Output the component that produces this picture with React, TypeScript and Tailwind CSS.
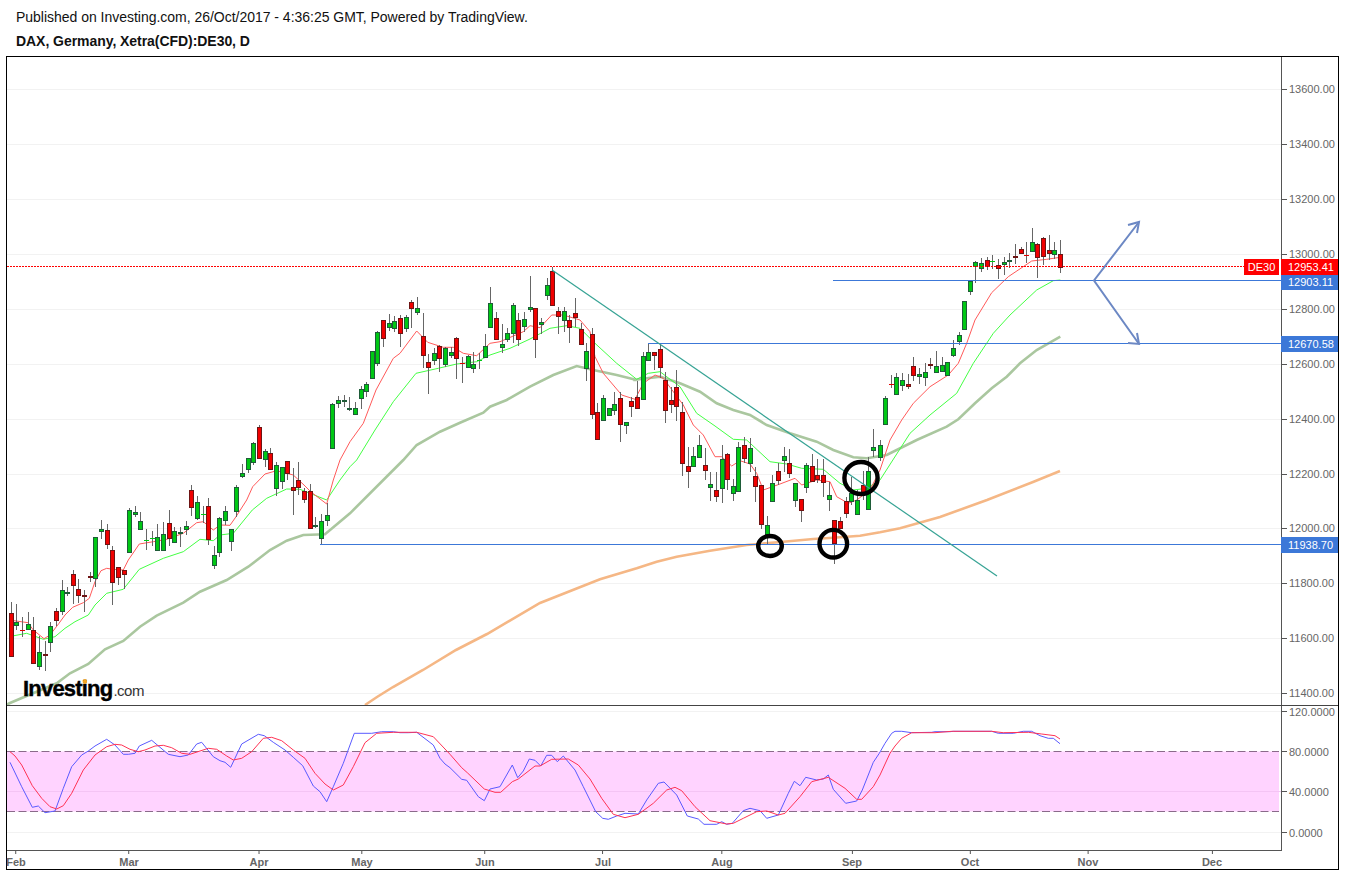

// DAX daily chart snapshot, values read off the reference at 3x zoom
type Candle = [number, number, number, number, number, string];
type Pt = [number, number];

const fromZoom = (ox: number, oy: number, pts: number[][]): Pt[] =>
  pts.map(p => [ox + p[0] / 3, oy + p[1] / 3] as Pt);

const toPoints = (pts: Pt[]) => pts.map(p => `${p[0].toFixed(1)},${p[1].toFixed(1)}`).join(' ');

const candleSets: { ox: number; oy: number; rows: Candle[] }[] = [
  {
    ox: 0, oy: 500, rows: [
      [34, 307, 469, 340, 469, 'r'], [49, 313, 390, 367, 376, 'g'], [67, 352, 410, 391, 391, 'r'], [85, 337, 390, 373, 386, 'g'],
      [100, 350, 490, 391, 490, 'r'], [118, 408, 510, 457, 499, 'g'], [136, 422, 512, 461, 461, 'm'], [151, 367, 455, 379, 427, 'g'],
      [169, 325, 378, 334, 361, 'r'], [187, 240, 345, 271, 334, 'g'], [202, 260, 288, 275, 275, 'd'], [220, 210, 312, 223, 256, 'r'],
      [235, 237, 308, 268, 286, 'r'], [253, 270, 335, 284, 284, 'm'], [271, 215, 245, 227, 227, 'm'], [287, 112, 262, 112, 235, 'g'],
      [304, 60, 118, 88, 94, 'g'], [322, 72, 146, 91, 131, 'r'], [338, 139, 315, 151, 247, 'r'], [355, 200, 255, 202, 232, 'r'],
      [373, 211, 268, 211, 223, 'r'], [388, 25, 158, 31, 157, 'g'], [406, 18, 50, 37, 43, 'g'], [421, 37, 90, 64, 88, 'g'],
    ],
  },
  {
    ox: 0, oy: 290, rows: [
      [439, 717, 780, 751, 751, 'g'], [457, 723, 768, 745, 745, 'g'], [472, 702, 782, 742, 781, 'g'], [490, 696, 782, 733, 779, 'g'],
      [508, 660, 768, 700, 745, 'r'], [523, 712, 757, 724, 755, 'g'], [541, 712, 771, 725, 725, 'd'], [559, 693, 735, 709, 716, 'g'],
      [574, 585, 678, 601, 650, 'r'], [592, 618, 690, 637, 685, 'g'], [610, 648, 700, 673, 673, 'g'], [625, 625, 765, 649, 748, 'r'],
      [643, 768, 836, 796, 824, 'g'], [658, 680, 800, 685, 787, 'g'], [676, 648, 705, 664, 689, 'g'], [694, 718, 782, 718, 752, 'g'],
      [709, 586, 680, 592, 664, 'g'], [727, 522, 565, 550, 557, 'g'], [745, 505, 548, 505, 536, 'g'], [760, 457, 525, 460, 517, 'g'],
      [778, 405, 505, 412, 505, 'r'], [796, 477, 530, 484, 506, 'g'], [811, 475, 540, 488, 538, 'r'], [829, 517, 617, 526, 595, 'g'],
      [847, 532, 598, 532, 574, 'g'], [862, 514, 570, 514, 550, 'r'], [880, 534, 674, 592, 601, 'r'], [895, 517, 614, 571, 590, 'r'],
      [913, 595, 640, 604, 626, 'r'], [931, 583, 717, 604, 715, 'r'], [946, 682, 715, 705, 705, 'd'], [964, 672, 762, 694, 743, 'g'],
      [982, 640, 708, 676, 689, 'g'],
    ],
  },
  {
    ox: 300, oy: 260, rows: [
      [97, 430, 565, 433, 563, 'g'], [115, 408, 443, 421, 430, 'g'], [133, 405, 440, 419, 419, 'd'], [148, 410, 452, 443, 443, 'd'],
      [166, 426, 465, 445, 463, 'g'], [184, 378, 446, 388, 413, 'g'], [199, 365, 410, 373, 394, 'g'], [217, 274, 358, 274, 353, 'g'],
      [232, 214, 317, 217, 310, 'g'], [250, 180, 260, 181, 235, 'r'], [268, 163, 214, 190, 202, 'g'], [283, 167, 216, 184, 205, 'g'],
      [301, 165, 260, 175, 220, 'r'], [319, 165, 215, 172, 205, 'g'], [334, 120, 205, 127, 143, 'r'], [352, 110, 165, 145, 157, 'g'],
      [370, 160, 325, 229, 286, 'r'], [385, 282, 402, 307, 322, 'r'], [403, 265, 315, 280, 301, 'g'], [418, 256, 335, 259, 295, 'r'],
      [436, 262, 320, 265, 313, 'g'], [454, 262, 295, 277, 286, 'g'], [469, 232, 357, 235, 295, 'r'], [487, 292, 368, 310, 310, 'r'],
      [505, 285, 325, 289, 322, 'g'], [520, 275, 340, 313, 325, 'g'], [538, 280, 327, 301, 301, 'g'], [556, 222, 295, 259, 292, 'g'],
      [571, 82, 205, 130, 202, 'g'], [589, 155, 240, 175, 238, 'r'], [607, 192, 278, 253, 262, 'g'], [622, 205, 245, 220, 238, 'g'],
      [640, 130, 250, 136, 220, 'g'], [655, 160, 258, 181, 238, 'r'], [673, 155, 215, 178, 199, 'g'], [691, 48, 155, 142, 148, 'g'],
      [706, 145, 293, 145, 238, 'r'], [724, 175, 222, 187, 193, 'g'], [742, 55, 120, 76, 106, 'g'], [757, 20, 136, 34, 136, 'r'],
      [775, 142, 222, 154, 169, 'r'], [793, 142, 216, 154, 181, 'g'], [808, 165, 248, 181, 202, 'r'], [826, 115, 200, 160, 172, 'r'],
      [844, 190, 255, 208, 253, 'r'], [859, 250, 363, 274, 325, 'g'], [877, 205, 478, 223, 463, 'r'], [892, 428, 540, 457, 538, 'r'],
    ],
  },
  {
    ox: 600, oy: 340, rows: [
      [10, 165, 242, 175, 241, 'g'], [28, 205, 226, 205, 226, 'g'], [43, 157, 225, 193, 211, 'g'], [61, 157, 305, 175, 253, 'r'],
      [79, 247, 283, 247, 256, 'g'], [94, 170, 230, 184, 199, 'r'], [112, 122, 207, 172, 205, 'r'], [130, 35, 180, 49, 178, 'g'],
      [145, 10, 62, 37, 61, 'g'], [163, 37, 90, 37, 46, 'r'], [181, 10, 115, 28, 82, 'r'], [196, 95, 248, 121, 211, 'r'],
      [214, 140, 220, 181, 193, 'r'], [229, 90, 242, 142, 199, 'r'], [247, 185, 407, 217, 370, 'r'], [265, 320, 445, 379, 394, 'r'],
      [280, 320, 382, 349, 379, 'g'], [298, 285, 355, 316, 352, 'g'], [316, 325, 420, 376, 391, 'r'], [331, 395, 482, 433, 442, 'g'],
      [349, 395, 485, 451, 469, 'r'], [367, 315, 488, 358, 445, 'g'], [382, 340, 450, 343, 418, 'r'], [400, 418, 482, 439, 460, 'g'],
      [415, 305, 455, 322, 454, 'g'], [433, 290, 370, 316, 355, 'r'], [451, 295, 395, 325, 370, 'g'], [466, 380, 485, 409, 439, 'r'],
      [484, 436, 568, 436, 553, 'r'], [502, 528, 615, 556, 583, 'g'], [517, 405, 485, 430, 484, 'g'], [535, 370, 435, 394, 421, 'r'],
      [553, 320, 395, 349, 361, 'g'], [568, 328, 415, 370, 400, 'r'], [586, 430, 500, 430, 481, 'g'], [604, 478, 545, 478, 511, 'r'],
      [619, 370, 460, 376, 442, 'g'], [637, 343, 425, 379, 424, 'r'], [652, 358, 430, 406, 418, 'r'], [670, 358, 470, 406, 427, 'r'],
      [688, 425, 512, 466, 478, 'g'], [703, 541, 672, 541, 610, 'r'], [721, 532, 565, 544, 565, 'r'], [739, 470, 535, 484, 520, 'r'],
      [754, 410, 495, 460, 484, 'g'], [772, 450, 525, 481, 523, 'g'], [790, 392, 480, 435, 455, 'r'], [805, 350, 508, 392, 508, 'g'],
      [821, 267, 350, 322, 331, 'g'], [841, 300, 362, 316, 352, 'g'],
    ],
  },
  {
    ox: 850, oy: 200, rows: [
      [106, 588, 674, 595, 673, 'g'], [124, 525, 563, 553, 553, 'r'], [139, 520, 585, 532, 583, 'g'], [157, 520, 572, 541, 556, 'g'],
      [175, 522, 566, 553, 559, 'r'], [190, 470, 543, 499, 526, 'r'], [208, 505, 552, 523, 529, 'g'], [226, 488, 558, 517, 532, 'g'],
      [241, 475, 506, 491, 491, 'm'], [259, 453, 518, 499, 517, 'g'], [277, 472, 516, 496, 514, 'g'], [292, 487, 527, 487, 526, 'g'],
      [310, 420, 470, 445, 466, 'g'], [328, 395, 436, 406, 424, 'g'], [343, 304, 390, 304, 388, 'g'], [361, 242, 284, 244, 274, 'g'],
      [376, 182, 248, 187, 199, 'g'], [394, 175, 215, 190, 205, 'g'], [412, 170, 210, 181, 199, 'r'], [427, 165, 208, 184, 184, 'g'],
      [445, 178, 236, 196, 205, 'r'], [463, 172, 225, 187, 193, 'g'], [478, 160, 205, 180, 180, 'd'], [496, 132, 192, 168, 168, 'm'],
      [514, 140, 162, 148, 160, 'r'], [529, 125, 188, 166, 166, 'r'], [547, 85, 157, 127, 154, 'g'], [562, 130, 234, 133, 172, 'r'],
      [580, 112, 196, 115, 169, 'r'], [598, 105, 180, 151, 160, 'r'], [613, 127, 178, 151, 163, 'g'], [631, 120, 218, 163, 202, 'r'],
    ],
  },
];

const candles = candleSets.flatMap(set =>
  set.rows.map(r => ({
    x: Math.floor(set.ox + r[0] / 3) + 0.5,
    wickTop: Math.round(set.oy + r[1] / 3),
    wickBottom: Math.round(set.oy + r[2] / 3),
    top: Math.round(set.oy + r[3] / 3) + 0.5,
    bottom: Math.round(set.oy + r[4] / 3) + 0.5,
    kind: r[5],
  })),
);

const redEma = toPoints([
  ...fromZoom(0, 500, [[42, 362], [84, 368], [100, 390], [132, 416], [150, 405], [177, 370], [195, 345], [218, 322], [250, 308], [268, 295], [285, 245], [303, 212], [320, 205], [338, 208], [370, 210], [385, 180], [418, 132], [460, 125], [500, 118], [550, 100], [590, 68]]),
  ...fromZoom(0, 290, [[610, 695], [640, 720], [660, 705], [690, 706], [708, 680], [740, 630], [758, 590], [795, 552], [830, 542], [880, 555], [912, 585], [932, 605], [980, 642], [1000, 570], [1020, 510]]),
  ...fromZoom(300, 260, [[150, 545], [190, 490], [228, 390], [280, 295], [300, 280], [350, 213], [383, 247], [430, 262], [460, 262], [490, 280], [530, 287], [570, 250], [600, 245], [670, 215], [690, 197], [720, 203], [755, 165], [790, 165], [840, 180], [870, 215], [885, 290]]),
  ...fromZoom(600, 340, [[10, 100], [65, 165], [105, 178], [130, 130], [165, 105], [190, 115], [250, 195], [280, 255], [310, 285], [345, 350], [365, 350], [395, 378], [420, 362], [450, 372], [470, 400], [490, 450], [540, 432], [585, 415], [605, 435], [650, 420], [690, 425], [710, 470], [745, 490], [770, 480], [810, 450]]),
  ...fromZoom(850, 200, [[90, 810], [120, 720], [155, 660], [190, 610], [240, 560], [295, 525], [325, 490], [350, 430], [375, 360], [425, 278], [475, 230], [545, 183], [590, 178], [631, 172]]),
]);

const greenEma = toPoints([
  ...fromZoom(0, 500, [[42, 407], [80, 400], [130, 418], [165, 410], [195, 385], [225, 365], [265, 345], [285, 315], [320, 280], [370, 268], [418, 208], [490, 175], [550, 155], [600, 118]]),
  ...fromZoom(0, 290, [[640, 752], [660, 735], [700, 730], [757, 660], [800, 625], [860, 597], [900, 598], [980, 630], [1020, 570], [1050, 530]]),
  ...fromZoom(300, 260, [[170, 600], [225, 510], [280, 425], [348, 340], [415, 325], [470, 312], [530, 305], [570, 285], [630, 265], [690, 237], [750, 205], [800, 197], [840, 205], [885, 250]]),
  ...fromZoom(600, 340, [[50, 70], [110, 118], [145, 100], [180, 95], [240, 140], [290, 220], [345, 258], [400, 298], [440, 300], [510, 365], [560, 372], [605, 385], [670, 388], [720, 430], [760, 450], [800, 445]]),
  ...fromZoom(850, 200, [[90, 840], [180, 700], [240, 645], [320, 580], [370, 490], [430, 400], [480, 345], [560, 270], [610, 242], [631, 240]]),
]);

const oliveEma = toPoints([
  [6, 705], [10, 703], ...fromZoom(0, 500, [[170, 550], [210, 520], [265, 492], [315, 448], [370, 423], [420, 380], [470, 347], [550, 308], [600, 275]]),
  ...fromZoom(0, 290, [[680, 870], [745, 830], [810, 780], [860, 752], [910, 735], [975, 733], [1050, 670]]),
  ...fromZoom(300, 260, [[310, 600], [350, 555], [420, 515], [480, 488], [550, 458], [570, 440], [620, 420], [690, 380], [760, 345], [830, 318], [880, 330], [950, 345], [1010, 360]]),
  ...fromZoom(600, 340, [[100, 120], [180, 110], [240, 130], [300, 155], [350, 190], [400, 210], [450, 225], [500, 255], [570, 280], [650, 305], [700, 330], [760, 352]]),
  ...fromZoom(850, 200, [[50, 775], [110, 765], [200, 720], [290, 680], [325, 658], [375, 610], [425, 565], [470, 530], [510, 490], [560, 450], [631, 410]]),
]);

const orangeEma = toPoints([
  [365, 705], [377, 697], [393, 687], [423, 670], [456, 650], [487, 634], [540, 603],
  ...fromZoom(600, 340, [[0, 718], [60, 700], [110, 685], [170, 665], [230, 650], [330, 632], [440, 615], [550, 605], [640, 597], [700, 593], [780, 587], [840, 577], [900, 565]]),
  [940, 517], [987, 500], [1033, 482], [1060, 471],
]);

const stochBlue = toPoints([
  ...fromZoom(0, 670, [[30, 277], [65, 350], [97, 412], [115, 408], [135, 428], [165, 423], [190, 355], [215, 290], [245, 255], [265, 243], [285, 228], [320, 208], [345, 225], [370, 253], [385, 253], [405, 250], [418, 228], [455, 211], [480, 232], [505, 253], [540, 260], [565, 255], [590, 222], [605, 217], [640, 260], [660, 272], [675, 277], [692, 292], [725, 222], [775, 193], [793, 197], [820, 217], [855, 240], [880, 262], [908, 287], [940, 348], [960, 365], [980, 395], [1000, 350], [1030, 280], [1063, 190], [1115, 190], [1145, 185], [1180, 185], [1200, 188], [1225, 188], [1250, 187], [1300, 225], [1320, 265], [1335, 282]]),
  ...fromZoom(450, 700, [[0, 203], [35, 238], [50, 241], [85, 290], [103, 302], [120, 267], [150, 260], [187, 195], [203, 233], [220, 213], [238, 177], [255, 181], [272, 198], [290, 166], [305, 166], [322, 185], [340, 168], [375, 210], [400, 260], [437, 335], [458, 355], [475, 358], [500, 348], [525, 340], [565, 342], [590, 300], [625, 250], [642, 246], [680, 285], [712, 348], [745, 357], [762, 373], [800, 373], [815, 365], [830, 373], [847, 370], [880, 332], [900, 325], [930, 332], [950, 355], [985, 345], [1015, 280], [1033, 244], [1050, 257], [1067, 232], [1100, 240], [1120, 237], [1135, 225], [1150, 268], [1187, 310], [1220, 303], [1237, 270], [1270, 187], [1288, 160], [1305, 130], [1325, 100]]),
  ...fromZoom(895, 700, [[0, 94], [20, 94], [50, 98], [110, 97], [120, 95], [165, 95], [175, 94], [290, 94], [310, 100], [355, 100], [385, 94], [410, 94], [435, 107], [460, 115], [475, 115], [495, 131]]),
]);

const stochRed = toPoints([
  ...fromZoom(0, 670, [[30, 245], [45, 258], [65, 285], [97, 347], [125, 385], [150, 410], [170, 417], [190, 407], [215, 370], [250, 300], [285, 255], [320, 230], [345, 223], [365, 225], [390, 238], [415, 245], [435, 240], [465, 228], [490, 226], [515, 233], [545, 250], [570, 253], [600, 243], [625, 235], [650, 238], [680, 258], [700, 270], [725, 265], [755, 245], [790, 205], [815, 202], [845, 212], [880, 240], [915, 265], [945, 310], [975, 342], [1000, 360], [1030, 345], [1060, 290], [1095, 218], [1130, 190], [1180, 187], [1250, 187], [1300, 200]]),
  ...fromZoom(450, 700, [[0, 163], [35, 203], [52, 218], [103, 267], [135, 277], [152, 277], [187, 245], [205, 237], [255, 198], [270, 198], [305, 178], [355, 177], [385, 195], [420, 237], [455, 295], [490, 343], [525, 353], [565, 343], [610, 310], [650, 270], [675, 262], [695, 272], [735, 320], [780, 362], [830, 372], [850, 370], [880, 355], [920, 335], [950, 333], [985, 345], [1005, 340], [1050, 290], [1085, 245], [1135, 232], [1185, 265], [1220, 298], [1235, 298], [1270, 260], [1290, 225], [1320, 160]]),
  ...fromZoom(895, 700, [[0, 138], [20, 115], [50, 98], [120, 98], [170, 94], [290, 94], [325, 98], [400, 97], [440, 102], [480, 107], [495, 117]]),
]);

const priceGrid = [89, 144, 199, 254, 309, 364, 419, 474, 528, 583, 638, 693];
const priceTicks = ['13600.00', '13400.00', '13200.00', '13000.00', '12800.00', '12600.00', '12400.00', '12200.00', '12000.00', '11800.00', '11600.00', '11400.00'];
const priceTags = [
  { label: '12953.41', top: 259, height: 16, color: 'bg-[#ff0000]' },
  { label: '12903.11', top: 275, height: 15, color: 'bg-[#3c78d8]' },
  { label: '12670.58', top: 336, height: 16, color: 'bg-[#3c78d8]' },
  { label: '11938.70', top: 537, height: 16, color: 'bg-[#3c78d8]' },
];
const stochTicks = [
  { label: '120.0000', y: 711.5 },
  { label: '80.0000', y: 751.5 },
  { label: '40.0000', y: 791.5 },
  { label: '0.0000', y: 832.5 },
];
const months = [
  { label: 'Feb', x: 16 }, { label: 'Mar', x: 129 }, { label: 'Apr', x: 259 }, { label: 'May', x: 362 },
  { label: 'Jun', x: 485 }, { label: 'Jul', x: 603 }, { label: 'Aug', x: 722 }, { label: 'Sep', x: 852 },
  { label: 'Oct', x: 970 }, { label: 'Nov', x: 1088 }, { label: 'Dec', x: 1212 },
];

const fills: Record<string, [string, string]> = {
  g: ['#00c814', '#1e5c38'],
  r: ['#f00000', '#6e1414'],
};
const flats: Record<string, string> = { g: '#00c814', r: '#e00000', d: '#1e5c38', m: '#6e1414' };

function PriceChart() {
  return (
    <svg className="block w-[1274px] h-[648px]" viewBox="7 57 1274 648">
      {priceGrid.map(y => (
        <line key={y} x1={7} x2={1281} y1={y + 0.5} y2={y + 0.5} stroke="#f2f2f2" />
      ))}
      <polyline points={oliveEma} fill="none" stroke="#aac79f" strokeWidth={2.6} />
      <polyline points={orangeEma} fill="none" stroke="#f5b785" strokeWidth={2.6} />
      <polyline points={greenEma} fill="none" stroke="#44ff44" strokeWidth={1} />
      <polyline points={redEma} fill="none" stroke="#ff5a5a" strokeWidth={1} />
      <g shapeRendering="crispEdges">
        {candles.map(c => (
          <g key={c.x}>
            <line x1={c.x} x2={c.x} y1={c.wickTop} y2={c.wickBottom} stroke="#666666" />
            {c.top === c.bottom ? (
              <line x1={c.x - 2.5} x2={c.x + 2.5} y1={c.top} y2={c.top} stroke={flats[c.kind]} strokeWidth={c.kind === 'd' || c.kind === 'm' ? 2 : 1} />
            ) : (
              <rect x={c.x - 2} y={c.top} width={4} height={c.bottom - c.top} fill={fills[c.kind][0]} stroke={fills[c.kind][1]} />
            )}
          </g>
        ))}
      </g>
      <line x1={7} x2={1244} y1={266.5} y2={266.5} stroke="#ff0000" strokeDasharray="2 1" shapeRendering="crispEdges" />
      <g stroke="#3c78d8" shapeRendering="crispEdges">
        <line x1={833} x2={1281} y1={280.5} y2={280.5} />
        <line x1={648} x2={1281} y1={343.5} y2={343.5} />
        <line x1={320} x2={1281} y1={544.5} y2={544.5} />
      </g>
      <line x1={552} y1={270} x2={997} y2={576} stroke="#36a394" strokeWidth={1.2} />
      <g fill="none" stroke="#6c88c4" strokeWidth={2}>
        <polyline points="1139,222 1094,280.5 1139,344" />
        <polyline points="1128,225 1139,222 1137,233" />
        <polyline points="1128,343 1139,344 1137,333" />
      </g>
      <g fill="none" stroke="#000000" strokeWidth={4.4}>
        <ellipse cx={770} cy={546} rx={11.8} ry={10} />
        <ellipse cx={833.3} cy={543.7} rx={13.8} ry={13.8} />
        <ellipse cx={861} cy={478} rx={16.6} ry={16} />
      </g>
    </svg>
  );
}

function StochChart() {
  return (
    <svg className="block w-[1274px] h-[144px]" viewBox="7 706 1274 144">
      <rect x={7} y={751.5} width={1272} height={60} fill="#ffd3ff" />
      {[711.5, 791.5, 832.5].map(y => (
        <line key={y} x1={7} x2={1281} y1={y} y2={y} stroke={y === 791.5 ? '#f4c4f4' : '#f2f2f2'} />
      ))}
      <g stroke="#8a6a8a" strokeDasharray="8 3.5">
        <line x1={7} x2={1279} y1={751.5} y2={751.5} />
        <line x1={7} x2={1279} y1={811.5} y2={811.5} />
      </g>
      <polyline points={stochBlue} fill="none" stroke="#5a5aff" strokeWidth={1} />
      <polyline points={stochRed} fill="none" stroke="#ff3355" strokeWidth={1} />
    </svg>
  );
}

function AxisLabel({ y, label }: { y: number; label: string }) {
  return (
    <div className="absolute left-0 flex items-center h-[14px] -translate-y-1/2" style={{ top: y }}>
      <span className="block w-[5px] h-px bg-[#555555]" />
      <span className="ml-[2px] text-[11px] leading-[14px] text-[#666666]">{label}</span>
    </div>
  );
}

export default function App() {
  return (
    <div className="w-[1345px] h-[874px] bg-white overflow-hidden font-['Liberation_Sans',Arial,sans-serif]">
      <div className="h-[56px] pl-[16px] pt-[10px]">
        <p className="text-[14px] leading-[15px] tracking-[-0.02px] text-[#111111]">
          Published on Investing.com, 26/Oct/2017 - 4:36:25 GMT, Powered by TradingView.
        </p>
        <p className="mt-[9px] text-[14px] leading-[15px] font-bold tracking-[-0.05px] text-[#111111]">
          DAX, Germany, Xetra(CFD):DE30, D
        </p>
      </div>

      <div className="ml-[6px] w-[1333px] h-[814px] border border-black flex flex-col">
        {/* price pane */}
        <div className="flex h-[649px] border-b border-[#444444]">
          <div className="relative w-[1274px]">
            <PriceChart />
            <div className="absolute left-[16px] top-[619px] flex items-baseline">
              <span className="relative text-[22px] leading-[26px] font-bold tracking-[-0.8px] text-black [-webkit-text-stroke:0.4px_#000000]">
                Investing
                <span className="absolute left-[60px] top-[3px] w-[4px] h-[5px] rounded-full bg-[#f5a623]" />
              </span>
              <span className="ml-[1px] text-[15px] leading-[26px] tracking-[-0.5px] text-[#333333]">.com</span>
            </div>
            <div className="absolute left-[1237px] top-[202px] h-[16px] w-[35px] flex items-center justify-center bg-[#ff0000] text-[11px] text-white">
              DE30
            </div>
          </div>
          <div className="relative flex-1 border-l border-[#555555]">
            {priceTicks.map((label, i) => (
              <AxisLabel key={label} y={priceGrid[i] - 57} label={label} />
            ))}
            {priceTags.map(tag => (
              <div
                key={tag.label}
                className={`absolute -left-px right-0 flex items-center pl-[7px] text-[11px] text-white ${tag.color}`}
                style={{ top: tag.top - 57, height: tag.height }}
              >
                {tag.label}
              </div>
            ))}
          </div>
        </div>

        {/* stochastic pane */}
        <div className="flex h-[145px]">
          <div className="w-[1274px] border-b border-[#555555]">
            <StochChart />
          </div>
          <div className="relative flex-1 border-l border-[#555555]">
            {stochTicks.map(t => (
              <AxisLabel key={t.label} y={t.y - 706} label={t.label} />
            ))}
          </div>
        </div>

        {/* time axis */}
        <div className="relative w-[1274px] flex-1">
          {months.map(m => (
            <div key={m.label} className="absolute top-0 flex flex-col items-center -translate-x-1/2" style={{ left: m.x - 7 }}>
              <span className="block w-px h-[3px] bg-[#555555]" />
              <span className="mt-[2px] text-[11px] leading-[13px] font-bold text-[#666666]">{m.label}</span>
            </div>
          ))}
        </div>
      </div>
    </div>
  );
}
